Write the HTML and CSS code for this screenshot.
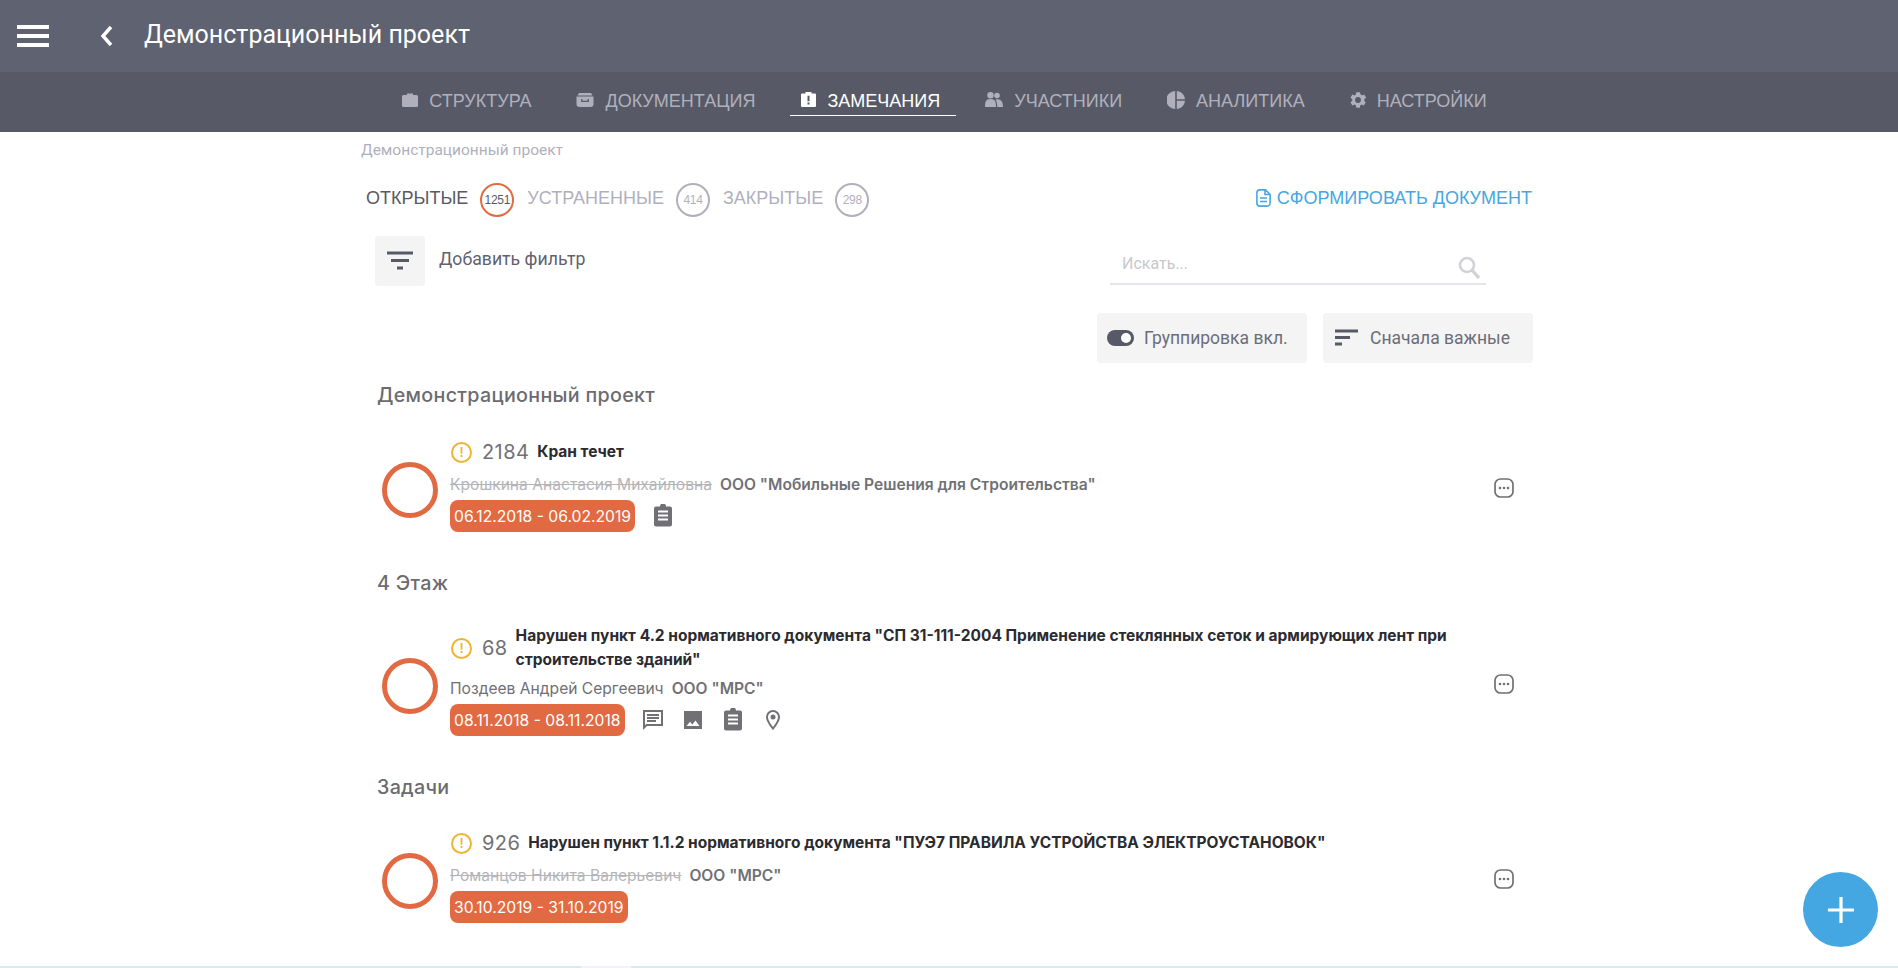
FILE: index.html
```html
<!DOCTYPE html>
<html lang="ru">
<head>
  <meta charset="UTF-8">
  <title>Демонстрационный проект</title>
  <link rel="stylesheet" href="styles.css">
</head>
<body>
  <header class="topbar">
    <button class="burger" type="button"><span></span><span></span><span></span></button>
    <svg class="back" viewBox="0 0 14 24" width="14" height="24"><path d="M11 3 3 12l8 9" fill="none" stroke="#fff" stroke-width="3.4"/></svg>
    <h1 class="title">Демонстрационный проект</h1>
  </header>

  <nav class="tabs">
    <a class="tab">
      <svg viewBox="0 0 16 14" width="16" height="14"><path d="M5 2V.6h6V2h3.500A1.500 1.500 0 0 1 16 3.500v9a1.500 1.500 0 0 1-1.500 1.500h-13A1.500 1.500 0 0 1 0 12.500v-9A1.500 1.500 0 0 1 1.500 2z" fill="currentColor"/></svg>
      СТРУКТУРА
    </a>
    <a class="tab">
      <svg viewBox="0 0 18 14" width="18" height="14"><path d="M3 0h12l1.500 2.500h-15zM.5 3.500h17V11a3 3 0 0 1-3 3h-11a3 3 0 0 1-3-3z" fill="currentColor"/><path d="M5.800 6v2.400h6.400V6" fill="none" stroke="#575a66" stroke-width="1.300"/></svg>
      ДОКУМЕНТАЦИЯ
    </a>
    <a class="tab active">
      <svg viewBox="0 0 15 15" width="15" height="15"><path d="M4.500 1.500V0h6v1.500H14a1 1 0 0 1 1 1V14a1 1 0 0 1-1 1H1a1 1 0 0 1-1-1V2.500a1 1 0 0 1 1-1z" fill="currentColor"/><path d="M6.500 3.800h2v5.400h-2zM6.500 10.400h2v2h-2z" fill="#575a66"/></svg>
      ЗАМЕЧАНИЯ
    </a>
    <a class="tab">
      <svg viewBox="0 0 19 15" width="19" height="15"><circle cx="6.500" cy="3.200" r="3.200" fill="currentColor"/><circle cx="13" cy="3.500" r="2.800" fill="currentColor"/><path d="M1 15c0-5 .5-8 5.500-8s5.500 3 5.500 8zM13.200 15c0-3-.3-5.500-1.700-7.500 5-1.200 7.500 1.500 7.500 7.500z" fill="currentColor"/></svg>
      УЧАСТНИКИ
    </a>
    <a class="tab">
      <svg viewBox="0 0 18 18" width="18" height="18"><path d="M8.200 0v18A9 9 0 0 1 8.200 0zM9.800 0A8.800 8.800 0 0 1 18 8.200H9.800zM9.800 9.800H18A8.800 8.800 0 0 1 9.800 18z" fill="currentColor"/></svg>
      АНАЛИТИКА
    </a>
    <a class="tab">
      <svg viewBox="2.500 2.500 19 19" width="16" height="16"><path d="M19.400 13a7.500 7.500 0 0 0 0-2l2.200-1.700-2.200-3.700-2.600 1a7.500 7.500 0 0 0-1.700-1L14.200 2.900H10l-.4 2.700a7.500 7.500 0 0 0-1.700 1l-2.600-1-2.200 3.700L5.300 11a7.500 7.500 0 0 0 0 2l-2.200 1.700 2.200 3.700 2.600-1a7.500 7.500 0 0 0 1.700 1l.4 2.700h4.200l.4-2.700a7.500 7.500 0 0 0 1.700-1l2.600 1 2.200-3.700zM12 15.500a3.500 3.500 0 1 1 0-7 3.500 3.500 0 0 1 0 7z" fill="currentColor"/></svg>
      НАСТРОЙКИ
    </a>
  </nav>

  <main class="content">
    <div class="breadcrumb">Демонстрационный проект</div>

    <div class="status-row">
      <span class="status current">ОТКРЫТЫЕ</span>
      <span class="count count-open">1251</span>
      <span class="status">УСТРАНЕННЫЕ</span>
      <span class="count">414</span>
      <span class="status">ЗАКРЫТЫЕ</span>
      <span class="count">298</span>
      <a class="make-doc">
        <svg viewBox="0 0 15 18" width="15" height="18"><path d="M4 .9h5.500l4.600 4.600V14a3.100 3.100 0 0 1-3.100 3.100H4A3.100 3.100 0 0 1 .9 14V4A3.100 3.100 0 0 1 4 .9zM9 1v4.500h5M4 9h7M4 12.500h7" fill="none" stroke="currentColor" stroke-width="1.600"/></svg>
        СФОРМИРОВАТЬ ДОКУМЕНТ
      </a>
    </div>

    <div class="filter-row">
      <button class="filter-btn" type="button">
        <svg viewBox="0 0 28 20" width="28" height="20"><path d="M1 2h26M5 9.500h18M11 17h6" stroke="#575a66" stroke-width="3" fill="none"/></svg>
      </button>
      <span class="filter-label">Добавить фильтр</span>
      <div class="search">
        <span class="search-text">Искать...</span>
        <svg viewBox="0 0 24 24" width="24" height="24"><circle cx="10" cy="10" r="7" fill="none" stroke="#d2d2d6" stroke-width="2.600"/><path d="M15 15l7 8" stroke="#d2d2d6" stroke-width="3.400"/></svg>
      </div>
    </div>

    <div class="toolbar">
      <button class="tool group-tool" type="button"><span class="toggle"></span>Группировка вкл.</button>
      <button class="tool sort-tool" type="button">
        <svg viewBox="0 0 23 18" width="23" height="18"><path d="M0 2h23M0 8.500h15M0 15h7" stroke="#575a66" stroke-width="2.800" fill="none"/></svg>
        Сначала важные
      </button>
    </div>

    <h2 class="group-title first">Демонстрационный проект</h2>
    <article class="issue issue-one">
      <span class="ring"></span>
      <div class="issue-body">
        <div class="issue-head">
          <span class="warn">!</span>
          <span class="num">2184</span>
          <span class="name">Кран течет</span>
        </div>
        <div class="people"><s>Крошкина Анастасия Михайловна</s><b>ООО "Мобильные Решения для Строительства"</b></div>
        <div class="meta">
          <span class="dates">06.12.2018 - 06.02.2019</span>
          <svg class="ico" viewBox="0 0 24 24" width="24" height="24"><use href="#i-clip"/></svg>
        </div>
      </div>
      <svg class="more" viewBox="0 0 20 20" width="20" height="20"><use href="#i-more"/></svg>
    </article>

    <h2 class="group-title">4 Этаж</h2>
    <article class="issue issue-two">
      <span class="ring"></span>
      <div class="issue-body">
        <div class="issue-head wrap">
          <span class="warn">!</span>
          <span class="num">68</span>
          <span class="name">Нарушен пункт 4.2 нормативного документа "СП 31-111-2004 Применение стеклянных сеток и армирующих лент при строительстве зданий"</span>
        </div>
        <div class="people"><span>Поздеев Андрей Сергеевич</span><b>ООО "МРС"</b></div>
        <div class="meta">
          <span class="dates">08.11.2018 - 08.11.2018</span>
          <svg class="ico" viewBox="0 0 24 24" width="24" height="24"><path d="M2 2h20v16H6l-4 4zM4 4v13.200L5.200 16H20V4zM6 6h12v2H6zM6 9h12v2H6zM6 12h9v2H6z" fill="currentColor"/></svg>
          <svg class="ico" viewBox="0 0 24 24" width="24" height="24"><path d="M3 3h18v18H3zM5.500 18h13l-4-5.500-3.200 4-2.300-2.800z" fill="currentColor" fill-rule="evenodd"/></svg>
          <svg class="ico" viewBox="0 0 24 24" width="24" height="24"><use href="#i-clip"/></svg>
          <svg class="ico" viewBox="0 0 24 24" width="24" height="24"><path d="M12 2a7 7 0 0 0-7 7c0 5 7 13 7 13s7-8 7-13a7 7 0 0 0-7-7zm0 2a5 5 0 0 1 5 5c0 3-3 7.500-5 10-2-2.500-5-7-5-10a5 5 0 0 1 5-5z" fill="currentColor"/><circle cx="12" cy="9" r="2.500" fill="currentColor"/></svg>
        </div>
      </div>
      <svg class="more" viewBox="0 0 20 20" width="20" height="20"><use href="#i-more"/></svg>
    </article>

    <h2 class="group-title">Задачи</h2>
    <article class="issue issue-three">
      <span class="ring"></span>
      <div class="issue-body">
        <div class="issue-head">
          <span class="warn">!</span>
          <span class="num">926</span>
          <span class="name">Нарушен пункт 1.1.2 нормативного документа "ПУЭ7 ПРАВИЛА УСТРОЙСТВА ЭЛЕКТРОУСТАНОВОК"</span>
        </div>
        <div class="people"><s>Романцов Никита Валерьевич</s><b>ООО "МРС"</b></div>
        <div class="meta">
          <span class="dates">30.10.2019 - 31.10.2019</span>
        </div>
      </div>
      <svg class="more" viewBox="0 0 20 20" width="20" height="20"><use href="#i-more"/></svg>
    </article>
  </main>

  <button class="fab" type="button">
    <svg viewBox="0 0 26 26" width="26" height="26"><path d="M13 0v26M0 13h26" stroke="#fff" stroke-width="3.200"/></svg>
  </button>

  <div class="bottom-strip"><span></span></div>

  <svg class="sprite" width="0" height="0">
    <symbol id="i-clip" viewBox="0 0 24 24">
      <path d="M9 3a3 3 0 0 1 6 0h4a2 2 0 0 1 2 2v16a2 2 0 0 1-2 2H5a2 2 0 0 1-2-2V5a2 2 0 0 1 2-2z" transform="translate(0 -.5)" fill="currentColor"/>
      <path d="M7 7.500h10M7 11.500h10M7 15.500h10" stroke="#fff" stroke-width="2"/>
    </symbol>
    <symbol id="i-more" viewBox="0 0 20 20">
      <rect x="1" y="1" width="18" height="18" rx="5.500" fill="none" stroke="#707075" stroke-width="1.700"/>
      <circle cx="6" cy="10" r="1.300" fill="#707075"/><circle cx="10" cy="10" r="1.300" fill="#707075"/><circle cx="14" cy="10" r="1.300" fill="#707075"/>
    </symbol>
  </svg>
</body>
</html>
```

FILE: styles.css
```css
:root {
  --top-bg: #5f6270;
  --nav-bg: #575a66;
  --accent: #e26a42;
  --blue: #45a7e1;
  --muted: #b0b0bd;
  --text: #6b6b70;
  --tool-bg: #f4f4f5;
}

* {
  box-sizing: border-box;
}

html, body {
  height: 100%;
}

body {
  margin: 0;
  display: flex;
  flex-direction: column;
  overflow: hidden;
  background: #fff;
  font-family: 'Inter', sans-serif;
  color: var(--text);
}

button {
  border: none;
  font-family: inherit;
  cursor: pointer;
}

.sprite {
  display: none;
}

.topbar {
  height: 72px;
  flex: none;
  display: flex;
  align-items: center;
  background: var(--top-bg);
  padding-left: 17px;
}

.burger {
  width: 32px;
  height: 22px;
  padding: 0;
  background: none;
  display: flex;
  flex-direction: column;
  justify-content: space-between;
}

.burger span {
  display: block;
  height: 4px;
  background: #fff;
}

.back {
  margin-left: 51px;
}

.title {
  margin: 0 0 3px 30px;
  font: 400 25px 'Roboto', sans-serif;
  color: #fff;
}

.tabs {
  height: 60px;
  flex: none;
  display: flex;
  justify-content: center;
  gap: 45px;
  padding-top: 15px;
  padding-right: 9px;
  background: var(--nav-bg);
}

.tab {
  height: 29px;
  display: flex;
  align-items: center;
  gap: 11px;
  font: 400 18px 'Liberation Sans', sans-serif;
  color: var(--muted);
}

.tab svg {
  margin-bottom: 4px;
}

.tab.active {
  color: #fff;
  border-bottom: 1.500px solid #fff;
  padding: 0 16px 0 11px;
  margin: 0 -17px 0 -10px;
}

.content {
  flex: 1;
  width: 1172px;
  margin-left: 361px;
}

.breadcrumb {
  padding-top: 9px;
  font: 400 15.500px 'Roboto', sans-serif;
  line-height: 19px;
  color: var(--muted);
}

.status-row {
  display: flex;
  align-items: center;
  height: 34px;
  margin-top: 23px;
  padding-left: 5px;
  font: 400 18px 'Liberation Sans', sans-serif;
}

.status {
  position: relative;
  top: -2px;
  color: var(--muted);
}

.status.current {
  color: var(--nav-bg);
}

.count {
  width: 34px;
  height: 34px;
  margin: 0 13px 0 12px;
  border: 2px solid var(--muted);
  border-radius: 50%;
  display: flex;
  align-items: center;
  justify-content: center;
  font: 400 12px 'Liberation Sans', sans-serif;
  letter-spacing: -.3px;
  color: var(--muted);
}

.count-open {
  border-color: var(--accent);
  color: var(--nav-bg);
}

.make-doc {
  margin-left: auto;
  margin-right: 1px;
  display: flex;
  align-items: center;
  gap: 6px;
  color: var(--blue);
  position: relative;
  top: -2px;
}

.filter-row {
  display: flex;
  margin-top: 19px;
  padding-left: 14px;
  height: 50px;
}

.filter-btn {
  width: 50px;
  height: 50px;
  padding: 0;
  border-radius: 4px;
  background: var(--tool-bg);
  display: flex;
  align-items: center;
  justify-content: center;
}

.filter-label {
  margin-left: 14px;
  padding-top: 13px;
  font: 400 17.700px 'Roboto', sans-serif;
  color: var(--top-bg);
}

.search {
  margin-left: auto;
  margin-right: 47px;
  width: 376px;
  height: 49px;
  padding: 18px 5px 0 12px;
  border-bottom: 2px solid #e4e4e9;
  display: flex;
  justify-content: space-between;
  font: 400 16px 'Roboto', sans-serif;
  color: #c8c8cc;
}

.search svg {
  margin-top: 1px;
}

.toolbar {
  display: flex;
  justify-content: flex-end;
  gap: 16px;
  margin-top: 27px;
}

.tool {
  height: 50px;
  padding: 0 0 1px;
  border-radius: 4px;
  background: var(--tool-bg);
  display: flex;
  align-items: center;
  font: 400 17.500px 'Roboto', sans-serif;
  color: #6b6d78;
}

.group-tool {
  width: 210px;
  padding-left: 10px;
  gap: 10px;
}

.sort-tool {
  width: 210px;
  padding-left: 12px;
  gap: 12px;
}

.toggle {
  position: relative;
  width: 27px;
  height: 16px;
  border-radius: 8px;
  background: var(--nav-bg);
}

.toggle::after {
  content: "";
  position: absolute;
  right: 3px;
  top: 3px;
  width: 10px;
  height: 10px;
  border-radius: 50%;
  background: #fff;
}

.group-title {
  margin: 39px 0 0;
  padding-left: 16px;
  font-size: 19.700px;
  font-weight: 500;
  line-height: 24px;
  letter-spacing: .3px;
  color: #6b6b70;
}

.group-title.first {
  margin-top: 20px;
}

.issue {
  display: flex;
  align-items: center;
  margin-top: 29px;
  padding-left: 21px;
  padding-right: 19px;
}

.issue-one {
  margin-top: 29px;
}

.issue-three {
  margin-top: 28px;
}

.ring {
  flex: none;
  width: 56px;
  height: 56px;
  margin-top: 11px;
  border: 5px solid var(--accent);
  border-radius: 50%;
}

.issue-body {
  flex: 1;
  margin-left: 12px;
  min-width: 0;
}

.issue-head {
  display: flex;
  align-items: center;
  height: 32px;
  padding-left: 1px;
}

.issue-head.wrap {
  height: auto;
  width: 1015px;
}

.warn {
  flex: none;
  width: 21px;
  height: 21px;
  border: 2px solid #f0b432;
  border-radius: 50%;
  display: flex;
  align-items: center;
  justify-content: center;
  font-size: 13px;
  font-weight: 600;
  color: #f0b432;
}

.num {
  flex: none;
  margin-left: 10px;
  font-size: 20px;
  letter-spacing: .4px;
  color: #707075;
}

.name {
  margin-left: 8px;
  font-size: 15.500px;
  font-weight: 700;
  line-height: 24px;
  color: #2b2b30;
}

.people {
  display: flex;
  gap: 8px;
  height: 26px;
  margin-top: 3px;
  align-items: center;
  font-size: 15.600px;
  color: #707075;
}

.people s {
  color: #b5b5b8;
}

.people b {
  font-weight: 600;
}

.meta {
  display: flex;
  align-items: center;
  gap: 16px;
  margin-top: 3px;
}

.dates {
  height: 32px;
  display: flex;
  align-items: center;
  padding: 0 4px;
  border-radius: 8px;
  background: var(--accent);
  font-size: 15.700px;
  color: #fff;
}

.ico {
  color: #707075;
}

.more {
  flex: none;
  margin-top: 7px;
}

.fab {
  position: absolute;
  right: 20px;
  bottom: 21px;
  width: 75px;
  height: 75px;
  padding: 0;
  border-radius: 50%;
  background: var(--blue);
  display: flex;
  align-items: center;
  justify-content: center;
}

.bottom-strip {
  height: 2px;
  flex: none;
  background: #dce9ec;
  padding-left: 581px;
}

.bottom-strip span {
  display: block;
  width: 50px;
  height: 2px;
  background: #f4f1f9;
}
```
